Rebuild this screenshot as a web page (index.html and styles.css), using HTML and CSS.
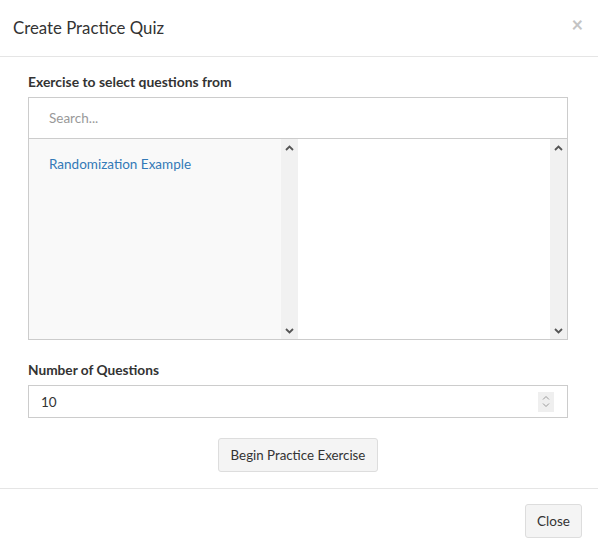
FILE: index.html
```html
<!DOCTYPE html>
<html>
<head>
<meta charset="utf-8">
<link rel="stylesheet" href="styles.css">
</head>
<body>
<div class="modal">
  <div class="modal-header">
    <h4 class="title">Create Practice Quiz</h4>
    <span class="close-x">×</span>
  </div>
  <div class="modal-body">
    <label class="label">Exercise to select questions from</label>
    <div class="ms">
      <div class="ms-search">Search...</div>
      <div class="ms-cols">
        <div class="ms-col ms-left">
          <div class="ms-list">
            <div class="ms-item">Randomization Example</div>
          </div>
          <div class="sbar">
            <svg width="9" height="6" viewBox="0 0 9 6"><path d="M1 5 L4.5 1.5 L8 5" fill="none" stroke="#555" stroke-width="1.8"/></svg>
            <svg width="9" height="6" viewBox="0 0 9 6"><path d="M1 1 L4.5 4.5 L8 1" fill="none" stroke="#555" stroke-width="1.8"/></svg>
          </div>
        </div>
        <div class="ms-col ms-right">
          <div class="ms-list"></div>
          <div class="sbar">
            <svg width="9" height="6" viewBox="0 0 9 6"><path d="M1 5 L4.5 1.5 L8 5" fill="none" stroke="#555" stroke-width="1.8"/></svg>
            <svg width="9" height="6" viewBox="0 0 9 6"><path d="M1 1 L4.5 4.5 L8 1" fill="none" stroke="#555" stroke-width="1.8"/></svg>
          </div>
        </div>
      </div>
    </div>
    <label class="label label-num">Number of Questions</label>
    <div class="num-input">
      <span class="num-val">10</span>
      <span class="spin">
        <svg width="8" height="5" viewBox="0 0 8 5"><path d="M1 4.5 L4 1.5 L7 4.5" fill="none" stroke="#999" stroke-width="1"/></svg>
        <svg width="8" height="5" viewBox="0 0 8 5"><path d="M1 0.5 L4 3.5 L7 0.5" fill="none" stroke="#999" stroke-width="1"/></svg>
      </span>
    </div>
    <div class="begin-row">
      <button class="btn">Begin Practice Exercise</button>
    </div>
  </div>
  <div class="modal-footer">
    <button class="btn btn-close">Close</button>
  </div>
</div>
</body>
</html>
```

FILE: styles.css
```css
* { box-sizing: border-box; }
body {
  margin: 0;
  font-family: Lato, "Liberation Sans", sans-serif;
  font-size: 13.5px;
  color: #333;
  background: #fff;
}
.modal { width: 598px; }
.modal-header {
  display: flex;
  justify-content: space-between;
  align-items: flex-start;
  height: 57px;
  padding: 15px 15px 0 13px;
  border-bottom: 1px solid #e5e5e5;
}
.title {
  margin: 0;
  font-size: 16.8px;
  font-weight: 400;
  line-height: 26px;
  color: #333;
}
.close-x {
  font-size: 20px;
  font-weight: 700;
  line-height: 18px;
  color: #c4c4c4;
}
.modal-body {
  padding: 16px 30px 16px 28px;
}
.label {
  display: block;
  font-size: 13.9px;
  font-weight: 700;
  line-height: 18px;
  margin-bottom: 6px;
  color: #333;
}
.label-num { margin-top: 21px; font-size: 13.7px; }
.ms {
  border: 1px solid #ccc;
  width: 540px;
}
.ms-search {
  height: 41px;
  padding: 12px 20px;
  line-height: 17px;
  color: #999;
  border-bottom: 1px solid #ccc;
}
.ms-cols {
  display: flex;
  height: 200px;
}
.ms-col {
  display: flex;
  flex: 1;
}
.ms-left { background: #f9f9f9; }
.ms-right { background: #fff; }
.ms-list { flex: 1; }
.ms-item {
  padding: 16px 20px 0 20px;
  line-height: 18px;
  color: #337ab7;
}
.sbar {
  width: 17px;
  background: #f1f1f1;
  display: flex;
  flex-direction: column;
  justify-content: space-between;
  align-items: center;
  padding: 6px 0 5px;
}
.num-input {
  display: flex;
  align-items: center;
  justify-content: space-between;
  width: 540px;
  height: 33px;
  border: 1px solid #ccc;
  padding: 0 13px 0 12px;
}
.num-val { line-height: 18px; }
.spin {
  display: flex;
  flex-direction: column;
  align-items: center;
  justify-content: center;
  gap: 3px;
  width: 16px;
  height: 20px;
  background: #efefef;
}
.begin-row {
  display: flex;
  justify-content: center;
  margin-top: 20px;
}
.btn {
  font-family: inherit;
  font-size: 13.3px;
  color: #333;
  background: #f4f4f4;
  border: 1px solid #ddd;
  border-radius: 3px;
  height: 34px;
  padding: 0 12px;
  line-height: 18px;
}
.modal-footer {
  display: flex;
  justify-content: flex-end;
  border-top: 1px solid #e5e5e5;
  padding: 15px 16px 15px;
}
.btn-close { width: 57px; padding: 0; font-size: 13.5px; }
```
